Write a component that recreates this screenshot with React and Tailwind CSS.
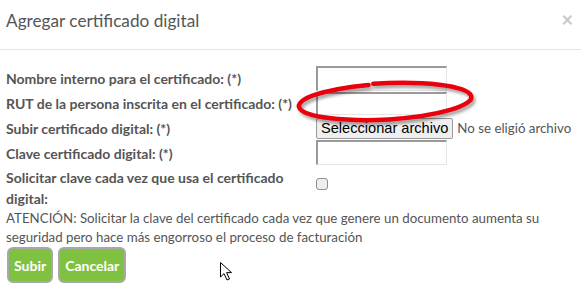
import React from "react";

const inputCls =
  "w-[131px] bg-white border border-t-2 border-l-2 border-t-[#9a9a9a] border-l-[#9a9a9a] border-r-[#e6e6e6] border-b-[#e6e6e6]";

export default function App() {
  return (
    <div
      className="relative w-[581px] h-[287px] overflow-hidden bg-white text-[#555555]"
      style={{ fontFamily: "Lato, 'Open Sans', sans-serif" }}
    >
      <div className="h-[50px] border-b border-[#e5e5e5] flex items-start justify-between pl-[6px] pr-[8px] pt-[9px]">
        <h4 className="text-[17.2px] leading-[24px] font-normal text-[#555]">Agregar certificado digital</h4>
        <span className="text-[20px] leading-[20px] font-bold text-[#c8c8c8]">×</span>
      </div>
      <div className="px-[6px] pt-[16px]">
        <div className="grid grid-cols-[310px_1fr] text-[14px]">
          <div className="h-[25px] flex items-center font-bold">Nombre interno para el certificado: (*)</div>
          <div className="h-[25px] flex items-center">
            <div className={inputCls + " h-[25px]"} />
          </div>
          <div className="h-[25px] flex items-center font-bold">RUT de la persona inscrita en el certificado: (*)</div>
          <div className="h-[25px] flex items-center">
            <div className={inputCls + " h-[23px]"} />
          </div>
          <div className="h-[25px] flex items-center font-bold">Subir certificado digital: (*)</div>
          <div className="h-[25px] flex items-center whitespace-nowrap">
            <div
              className="h-[21px] px-[4px] flex items-center bg-[#efefef] border border-[#9a9a9a] rounded-[2px] text-[14.6px] text-black"
              style={{ fontFamily: "'Liberation Sans', Arial, sans-serif" }}
            >
              Seleccionar archivo
            </div>
            <span className="ml-[4px] text-[13.3px] text-[#555]">No se eligió archivo</span>
          </div>
          <div className="h-[25px] flex items-center font-bold">Clave certificado digital: (*)</div>
          <div className="h-[25px] flex items-center">
            <div className={inputCls + " h-[25px] -mt-[3px]"} />
          </div>
          <div className="font-bold leading-[21px] pr-[20px] pt-[1px]">Solicitar clave cada vez que usa el certificado digital:</div>
          <div className="pt-[12px]">
            <div className="w-[12px] h-[12px] rounded-[3px] border border-[#8f8f8f] bg-[#eeeeee]" />
          </div>
        </div>
        <p className="text-[13.3px] leading-[19px] pt-[0px]">
          ATENCIÓN: Solicitar la clave del certificado cada vez que genere un documento aumenta su seguridad pero hace más engorroso el proceso de facturación
        </p>
        <div className="flex gap-[5px] mt-[0px] pl-[1px]">
          <button className="h-[36px] px-[5px] rounded-[6px] border-2 border-[#a8a8a8] bg-[#7fc241] text-white text-[14px] font-bold">
            Subir
          </button>
          <button className="h-[36px] px-[5px] rounded-[6px] border-2 border-[#a8a8a8] bg-[#7fc241] text-white text-[14px] font-bold">
            Cancelar
          </button>
        </div>
      </div>

      <svg className="absolute left-0 top-0 pointer-events-none" width="581" height="287">
        <defs>
          <filter id="sh" x="-20%" y="-50%" width="140%" height="200%">
            <feDropShadow dx="2" dy="3" stdDeviation="1.5" floodColor="#000" floodOpacity="0.35" />
          </filter>
        </defs>
        <path
          d="M373.2 83.8 A89 18 -3 1 1 388.9 119.5 A89 18 -3 0 1 368.6 84.9"
          fill="none"
          stroke="#e8000b"
          strokeWidth="4.5"
          strokeLinecap="round"
          filter="url(#sh)"
        />
        <path
          d="M220.5 262.5 L220.5 277 L224 273.6 L227 280 L229.5 279 L226.6 272.6 L231.5 272.6 Z"
          fill="#fff"
          stroke="#000"
          strokeWidth="1"
          strokeLinejoin="round"
        />
      </svg>
    </div>
  );
}
